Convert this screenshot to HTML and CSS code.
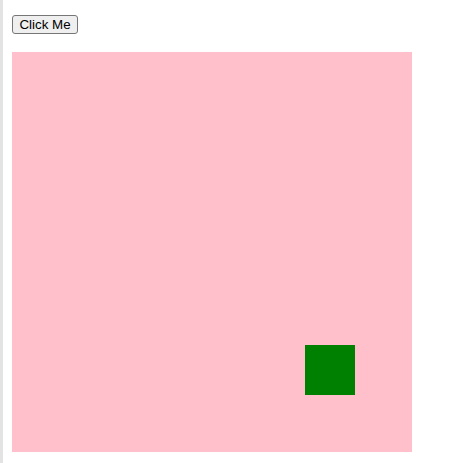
FILE: index.html
```html
<!DOCTYPE html>
<html>
<head>
<meta charset="utf-8">
<link rel="stylesheet" href="styles.css">
</head>
<body>
<div class="page">
  <div class="toolbar"><button class="btn">Click Me</button></div>
  <div class="canvas">
    <div class="square"></div>
  </div>
</div>
</body>
</html>
```

FILE: styles.css
```css
html, body {
  margin: 0;
  padding: 0;
  background: #fff;
}
.page {
  min-height: 463px;
  box-sizing: border-box;
  border-left: 3px solid #e3e3e3;
  padding: 15px 0 0 9px;
}
.toolbar {
  height: 19px;
  display: flex;
}
.btn {
  font-family: "Liberation Sans", Arial, sans-serif;
  font-size: 13.333px;
  line-height: 15px;
  padding: 1px 6px;
  margin: 0;
  width: 66px;
  height: 19px;
  border: 1px solid #767676;
  border-radius: 3px;
  background: #efefef;
  color: #000;
  text-align: center;
}
.canvas {
  margin-top: 18px;
  width: 400px;
  height: 400px;
  background: pink;
  position: relative;
}
.square {
  position: absolute;
  left: 293px;
  top: 293px;
  width: 50px;
  height: 50px;
  background: green;
}
```
